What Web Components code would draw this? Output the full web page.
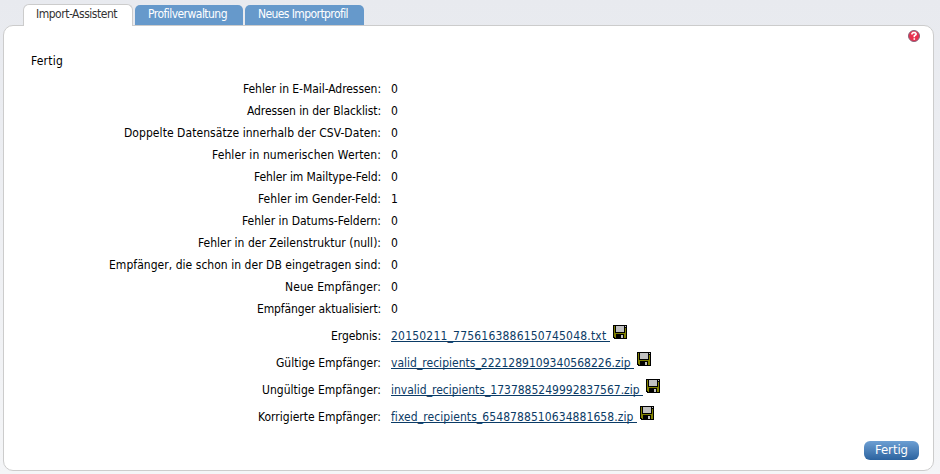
<!DOCTYPE html>
<html lang="de">
<head>
<meta charset="utf-8">
<title>Import-Assistent</title>
<style>
html,body{margin:0;height:474px;overflow:hidden}
body{font:12px/16px "DejaVu Sans Condensed","DejaVu Sans",sans-serif;font-stretch:condensed;color:#000;background:linear-gradient(#e8eaef,#f4f5f7)}
</style>
</head>
<body>
<import-page></import-page>
<script>
class FitText extends HTMLElement{
  connectedCallback(){
    const r=this.attachShadow({mode:'open'});
    r.innerHTML='<style>:host{display:inline-block;white-space:pre}</style><span><slot></slot></span>';
    const target=+this.getAttribute('w'), s=r.querySelector('span');
    const n=this.textContent.length, w=s.getBoundingClientRect().width;
    if(target&&n) s.style.letterSpacing=((target-w)/n)+'px';
  }
}
customElements.define('fit-text',FitText);

class TabItem extends HTMLElement{
  connectedCallback(){
    this.attachShadow({mode:'open'}).innerHTML=`<style>
    :host{display:block;box-sizing:border-box;height:20px;padding:1px 0 0 13px;line-height:16px;background:#6699cb;color:#fff;border-radius:5px 5px 0 0}
    :host([active]){height:22px;padding:1px 0 0 12px;background:#fff;color:#333;border:1px solid #ccc;border-bottom:0;border-radius:6px 6px 0 0;margin-bottom:-1px;z-index:1;position:relative}
    </style><slot></slot>`;
  }
}
customElements.define('tab-item',TabItem);

class DiskIcon extends HTMLElement{
  connectedCallback(){
    this.attachShadow({mode:'open'}).innerHTML=`<style>:host{display:block;width:14px;height:14px}svg{display:block}</style>
    <svg width="14" height="14" shape-rendering="crispEdges"><path fill="#000" d="M0 0h14v14H1v-1H0z"/><path fill="#808000" d="M1 1h1v7h10V3h1v10H2v-1H1z"/><path fill="#c0c0c0" d="M3 1h8v6H3zM12 1h1v1h-1z"/><path fill="#000" d="M3 9h8v4H3z"/><path fill="#c0c0c0" d="M8 10h2v3H8z"/></svg>`;
  }
}
customElements.define('disk-icon',DiskIcon);

class HelpIcon extends HTMLElement{
  connectedCallback(){
    this.attachShadow({mode:'open'}).innerHTML=`<style>:host{display:block;width:12px;height:12px}svg{display:block}</style>
    <svg width="12" height="12"><circle cx="6" cy="6" r="5.5" fill="#e92f4e" stroke="#85647a"/><path d="M4 4.5V3.5L5 2.6H7L8 3.5V4.6L6.3 6V7.3M6.3 8.3V9.8" fill="none" stroke="#fff" stroke-width="1.6"/></svg>`;
  }
}
customElements.define('help-icon',HelpIcon);

class ResultRow extends HTMLElement{
  connectedCallback(){
    const a=n=>this.getAttribute(n), link=this.hasAttribute('link');
    this.attachShadow({mode:'open'}).innerHTML=`<style>
    :host{display:grid;grid-template-columns:377px 1fr;column-gap:10px;height:${link?27:22}px;line-height:16px;align-items:${link?'start':'center'}}
    .l{text-align:right;padding-top:${link?6:0}px}
    .v{display:flex;gap:3px;align-items:flex-start}
    a{display:block;height:13px;line-height:16px;margin-top:6px;color:#0b3b66;border-bottom:1px solid #0b3b66}
    disk-icon{margin-top:3px}
    </style><div class="l"><fit-text w="${a('lw')}">${a('label')}</fit-text></div>
    <div class="v">${link?`<a><fit-text w="${a('vw')}">${a('value')} </fit-text></a><disk-icon></disk-icon>`:a('value')}</div>`;
  }
}
customElements.define('result-row',ResultRow);

class PushButton extends HTMLElement{
  connectedCallback(){
    this.attachShadow({mode:'open'}).innerHTML=`<style>:host{display:block;box-sizing:border-box;width:55px;height:19px;border-radius:6px;background:linear-gradient(#6d9fd3,#2c639f);color:#fff;font-size:13px;line-height:18px;text-align:center}</style><slot></slot>`;
  }
}
customElements.define('push-button',PushButton);

const counts=[["Fehler in E-Mail-Adressen:",138,0],["Adressen in der Blacklist:",134,0],["Doppelte Datensätze innerhalb der CSV-Daten:",257,0],["Fehler in numerischen Werten:",169,0],["Fehler im Mailtype-Feld:",127,0],["Fehler im Gender-Feld:",123,1],["Fehler in Datums-Feldern:",139,0],["Fehler in der Zeilenstruktur (null):",183,0],["Empfänger, die schon in der DB eingetragen sind:",272,0],["Neue Empfänger:",96,0],["Empfänger aktualisiert:",124,0]];
const files=[["Ergebnis:",50,"20150211_7756163886150745048.txt",219],["Gültige Empfänger:",105,"valid_recipients_2221289109340568226.zip",243],["Ungültige Empfänger:",119,"invalid_recipients_1737885249992837567.zip",252],["Korrigierte Empfänger:",123,"fixed_recipients_6548788510634881658.zip",246]];
class ImportPage extends HTMLElement{
  connectedCallback(){
    this.attachShadow({mode:'open'}).innerHTML=`<style>
    :host{display:block;box-sizing:border-box;height:474px;padding:4px 6px 3px 3px}
    nav{display:flex;align-items:flex-end;gap:2px;height:21px;padding-left:20px}
    main{box-sizing:border-box;height:446px;background:#fff;border:1px solid #ccc;border-radius:10px;position:relative}
    help-icon{position:absolute;right:13px;top:4px}
    .h{padding:27px 0 0 27px;height:25px}
    .files{padding-top:2px}
    push-button{margin:11px 14px 0 auto}
    </style>
    <nav><tab-item active style="width:110px"><fit-text w="81">Import-Assistent</fit-text></tab-item><tab-item style="width:108px"><fit-text w="79">Profilverwaltung</fit-text></tab-item><tab-item style="width:119px"><fit-text w="90">Neues Importprofil</fit-text></tab-item></nav>
    <main><help-icon></help-icon><div class="h"><fit-text w="32">Fertig</fit-text></div>
    ${counts.map(c=>`<result-row label="${c[0]}" lw="${c[1]}" value="${c[2]}"></result-row>`).join('')}
    <div class="files">${files.map(c=>`<result-row link label="${c[0]}" lw="${c[1]}" value="${c[2]}" vw="${c[3]}"></result-row>`).join('')}</div>
    <push-button><fit-text w="33">Fertig</fit-text></push-button></main>`;
  }
}
customElements.define('import-page',ImportPage);
</script>
</body>
</html>
